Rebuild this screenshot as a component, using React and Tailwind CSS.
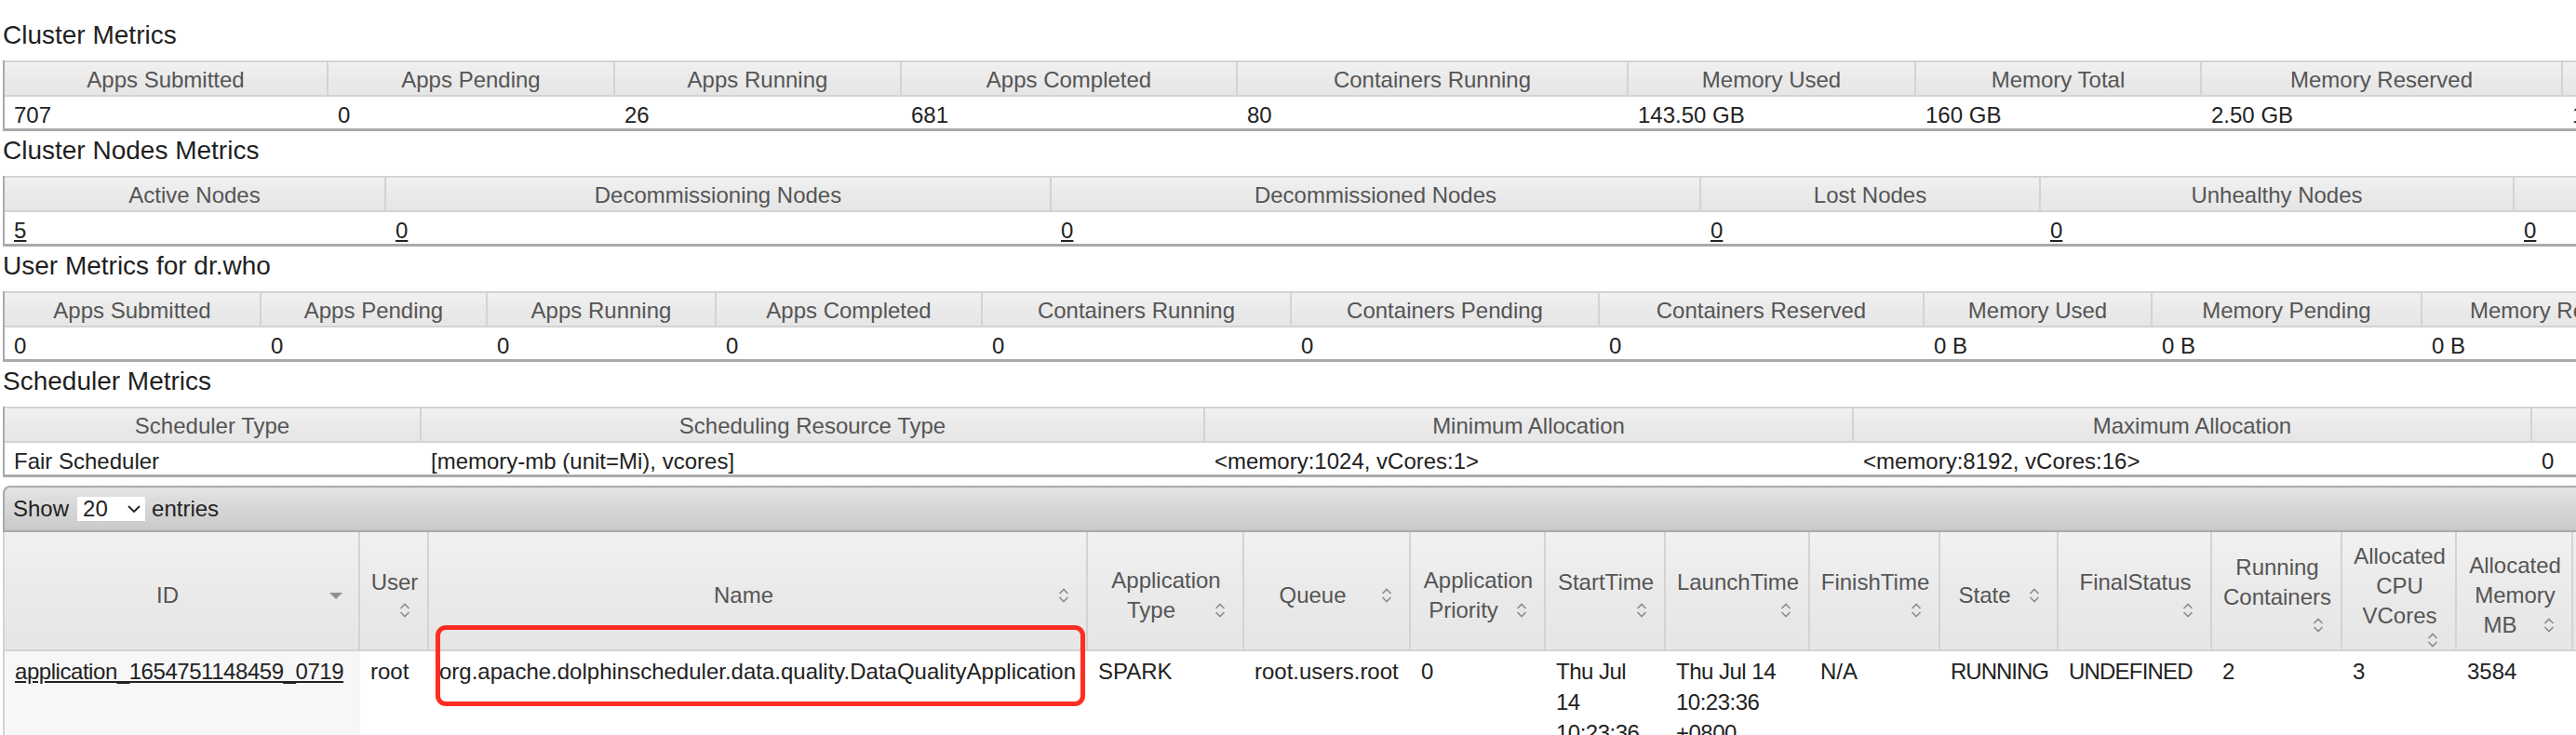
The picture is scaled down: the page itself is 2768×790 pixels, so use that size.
import React from 'react';

const clusterMetrics = [
  { w: 'w-[348px]', label: 'Apps Submitted', value: '707' },
  { w: 'w-[308px]', label: 'Apps Pending', value: '0' },
  { w: 'w-[308px]', label: 'Apps Running', value: '26' },
  { w: 'w-[361px]', label: 'Apps Completed', value: '681' },
  { w: 'w-[420px]', label: 'Containers Running', value: '80' },
  { w: 'w-[309px]', label: 'Memory Used', value: '143.50 GB' },
  { w: 'w-[307px]', label: 'Memory Total', value: '160 GB' },
  { w: 'w-[388px]', label: 'Memory Reserved', value: '2.50 GB' },
  { w: 'w-[320px]', label: 'VCores Used', value: '104' },
  { w: 'w-[320px]', label: 'VCores Total', value: '160' },
];

const nodeMetrics = [
  { w: 'w-[410px]', label: 'Active Nodes', value: '5', link: true },
  { w: 'w-[715px]', label: 'Decommissioning Nodes', value: '0', link: true },
  { w: 'w-[698px]', label: 'Decommissioned Nodes', value: '0', link: true },
  { w: 'w-[365px]', label: 'Lost Nodes', value: '0', link: true },
  { w: 'w-[509px]', label: 'Unhealthy Nodes', value: '0', link: true },
  { w: 'w-[500px]', label: 'Rebooted Nodes', value: '0', link: true },
  { w: 'w-[500px]', label: 'Shutdown Nodes', value: '0', link: true },
];

const userMetrics = [
  { w: 'w-[276px]', label: 'Apps Submitted', value: '0' },
  { w: 'w-[243px]', label: 'Apps Pending', value: '0' },
  { w: 'w-[246px]', label: 'Apps Running', value: '0' },
  { w: 'w-[286px]', label: 'Apps Completed', value: '0' },
  { w: 'w-[332px]', label: 'Containers Running', value: '0' },
  { w: 'w-[331px]', label: 'Containers Pending', value: '0' },
  { w: 'w-[349px]', label: 'Containers Reserved', value: '0' },
  { w: 'w-[245px]', label: 'Memory Used', value: '0 B' },
  { w: 'w-[290px]', label: 'Memory Pending', value: '0 B' },
  { w: 'w-[300px]', label: 'Memory Reserved', value: '0 B' },
  { w: 'w-[300px]', label: 'VCores Used', value: '0' },
];

const schedulerMetrics = [
  { w: 'w-[448px]', label: 'Scheduler Type', value: 'Fair Scheduler' },
  { w: 'w-[842px]', label: 'Scheduling Resource Type', value: '[memory-mb (unit=Mi), vcores]' },
  { w: 'w-[697px]', label: 'Minimum Allocation', value: '<memory:1024, vCores:1>' },
  { w: 'w-[729px]', label: 'Maximum Allocation', value: '<memory:8192, vCores:16>' },
  { w: 'w-[600px]', label: 'Maximum Cluster Application Priority', value: '0' },
];

const sections = [
  { title: 'Cluster Metrics', cols: clusterMetrics },
  { title: 'Cluster Nodes Metrics', cols: nodeMetrics },
  { title: 'User Metrics for dr.who', cols: userMetrics },
  { title: 'Scheduler Metrics', cols: schedulerMetrics },
];

// tight = the reference renders these digit/capital runs a little narrower
const appCols = [
  { w: 'w-[382px]', lines: ['ID'], pos: 'inline', icon: 'desc', data: ['application_1654751148459_0719'], link: true, sorted: true, tight: 'tracking-[-0.45px]' },
  { w: 'w-[74px]', lines: ['User'], pos: 'below', data: ['root'] },
  { w: 'w-[708px]', lines: ['Name'], pos: 'inline', data: ['org.apache.dolphinscheduler.data.quality.DataQualityApplication'] },
  { w: 'w-[168px]', lines: ['Application', 'Type'], pos: 'inline', data: ['SPARK'] },
  { w: 'w-[179px]', lines: ['Queue'], pos: 'inline', data: ['root.users.root'] },
  { w: 'w-[145px]', lines: ['Application', 'Priority'], pos: 'inline', data: ['0'] },
  { w: 'w-[129px]', lines: ['StartTime'], pos: 'below', data: ['Thu Jul', '14', '10:23:36', '+0800', '2022'], tight: 'tracking-[-0.5px]' },
  { w: 'w-[155px]', lines: ['LaunchTime'], pos: 'below', data: ['Thu Jul 14', '10:23:36', '+0800', '2022'], tight: 'tracking-[-0.5px]' },
  { w: 'w-[140px]', lines: ['FinishTime'], pos: 'below', data: ['N/A'] },
  { w: 'w-[127px]', lines: ['State'], pos: 'inline', data: ['RUNNING'], tight: 'tracking-[-1px]' },
  { w: 'w-[165px]', lines: ['FinalStatus'], pos: 'below', data: ['UNDEFINED'], tight: 'tracking-[-0.8px]' },
  { w: 'w-[140px]', lines: ['Running', 'Containers'], pos: 'below', data: ['2'] },
  { w: 'w-[123px]', lines: ['Allocated', 'CPU', 'VCores'], pos: 'below', data: ['3'] },
  { w: 'w-[125px]', lines: ['Allocated', 'Memory', 'MB'], pos: 'inline', data: ['3584'] },
  { w: 'w-[150px]', lines: ['Reserved', 'CPU', 'VCores'], pos: 'below', data: ['0'] },
];

function SortIcon() {
  return (
    <svg width="12" height="18" viewBox="0 0 12 18" fill="none" stroke="#8c8c8c" strokeWidth="1.6">
      <polyline points="1.5,7 6,2.5 10.5,7" />
      <polyline points="1.5,11 6,15.5 10.5,11" />
    </svg>
  );
}

function DescIcon() {
  return (
    <svg width="14" height="7" viewBox="0 0 14 7">
      <polygon points="0,0 14,0 7,7" fill="#8f8f8f" />
    </svg>
  );
}

function MetricsTable({ cols }) {
  return (
    <div className="flex w-max border-l-2 border-[#aaaaaa]">
      {cols.map((c) => (
        <div key={c.label} className={`${c.w} shrink-0`}>
          <div className="flex h-[39px] items-center justify-center whitespace-nowrap border-y-2 border-r-2 border-[#d3d3d3] bg-linear-to-b from-[#f1f1f1] via-[#eaeaea] to-[#e6e6e6] pt-[2px] text-[#555555]">
            {c.label}
          </div>
          <div className="flex h-[37px] items-center whitespace-nowrap border-b-[3px] border-[#aaaaaa] bg-white pl-[10px] pt-[5px] text-[#222222]">
            {c.link ? <a className="underline">{c.value}</a> : c.value}
          </div>
        </div>
      ))}
    </div>
  );
}

function HeadCell({ col }) {
  const last = col.lines.length - 1;
  const icon = col.icon === 'desc' ? <DescIcon /> : <SortIcon />;
  return (
    <div className={`${col.w} flex h-[128px] shrink-0 flex-col justify-center border-b-2 border-r-2 border-[#d3d3d3] bg-linear-to-b from-[#f1f1f1] via-[#eaeaea] to-[#e6e6e6] pl-[10px] pr-[8px] pt-[10px] text-center leading-[32px] text-[#555555]`}>
      {col.lines.map((line, i) =>
        i === last && col.pos === 'inline' ? (
          <div key={line} className="flex">
            <span className="flex-1 whitespace-nowrap text-center">{line}</span>
            <span className="flex w-[32px] items-center justify-center">{icon}</span>
          </div>
        ) : (
          <div key={line} className="whitespace-nowrap">{line}</div>
        )
      )}
      {col.pos === 'below' && (
        <div className="flex h-[28px] justify-end">
          <span className="flex w-[32px] items-center justify-center">{icon}</span>
        </div>
      )}
    </div>
  );
}

function AppsTable() {
  return (
    <div className="w-max">
      <div className="flex h-[50px] items-center rounded-tl-[8px] border-2 border-r-0 border-[#aaaaaa] bg-linear-to-b from-[#e4e4e4] to-[#c9c9c9] pl-[9px] text-[#222222]">
        <span>Show</span>
        <div className="ml-[9px] flex h-[26px] w-[73px] items-center bg-white pl-[6px]">
          <span>20</span>
          <svg className="ml-[21px]" width="14" height="8" viewBox="0 0 14 8" fill="none" stroke="#222" strokeWidth="1.8">
            <polyline points="1,1 7,7 13,1" />
          </svg>
        </div>
        <span className="ml-[7px]">entries</span>
      </div>
      <div className="flex border-l-2 border-[#d3d3d3]">
        {appCols.map((c, i) => (
          <div key={i} className={`${c.w} shrink-0`}>
            <HeadCell col={c} />
            <div className={`h-[200px] pl-[11px] pr-[8px] pt-[5px] leading-[33px] text-[#222222] ${c.sorted ? 'bg-[#f7f7f7]' : 'bg-white'} ${c.tight || ''}`}>
              {c.data.map((d) => (
                <div key={d} className="whitespace-nowrap">
                  {c.link ? <a className="underline">{d}</a> : d}
                </div>
              ))}
            </div>
          </div>
        ))}
      </div>
    </div>
  );
}

export default function App() {
  return (
    <div className="relative h-screen w-screen overflow-hidden bg-white pl-[3px] pt-[22px] font-['Liberation_Sans',Arial,Helvetica,sans-serif] text-[24px] text-[#222222]">
      <div className="flex flex-col gap-[5px]">
        {sections.map((s) => (
          <section key={s.title}>
            <h3 className="mb-[11px] h-[32px] text-[28px] leading-[32px] text-[#1f1f1f]">{s.title}</h3>
            <MetricsTable cols={s.cols} />
          </section>
        ))}
      </div>
      <div className="mt-[9px]">
        <AppsTable />
      </div>
      <div className="absolute left-[468px] top-[672px] h-[87px] w-[698px] rounded-[11px] border-[5px] border-[#ff2d21]" />
    </div>
  );
}
